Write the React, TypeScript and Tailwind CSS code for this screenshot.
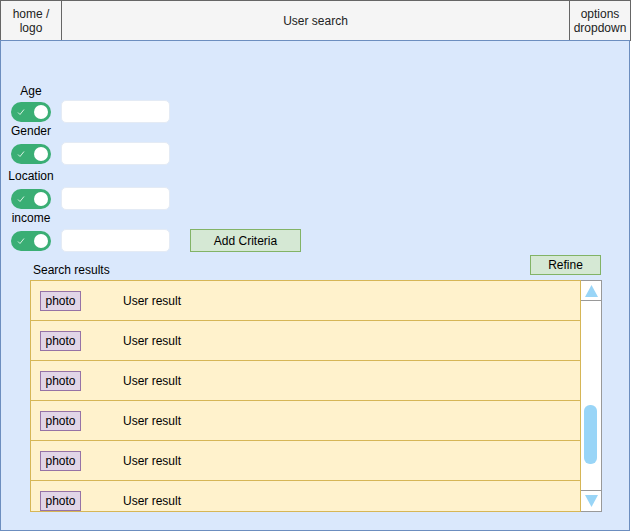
import React from "react";

const criteria = [
  { label: "Age", labelClass: "mt-[43px]", rowClass: "mt-[2px]" },
  { label: "Gender", labelClass: "mt-[1px]", rowClass: "mt-[4px]" },
  { label: "Location", labelClass: "mt-[4px]", rowClass: "mt-[4px]" },
  { label: "income", labelClass: "mt-[1px]", rowClass: "mt-[4px]" },
];

function Toggle() {
  return (
    <div className="relative flex h-[20px] w-[40px] items-center rounded-full bg-[#3aae74]">
      <svg width="8" height="8" viewBox="0 0 8 8" className="absolute left-[6px] top-[6px]">
        <path d="M1 4.5 L3 6.5 L7 1.5" fill="none" stroke="#d9f2e3" strokeWidth="1" />
      </svg>
      <div className="absolute right-[3px] top-[3px] h-[14px] w-[14px] rounded-full bg-white" />
    </div>
  );
}

function ResultRow() {
  return (
    <div className="flex h-[40px] shrink-0 items-center border-t border-[#d6b656] bg-[#fff2cc] pl-[9px]">
      <span className="flex h-[20px] w-[41px] items-center justify-center border border-[#9673a6] bg-[#e1d5e7] text-[12px] text-black">
        photo
      </span>
      <span className="ml-[42px] text-[12px] text-black">User result</span>
    </div>
  );
}

export default function App() {
  return (
    <div className="h-[531px] w-[631px] bg-white font-['Liberation_Sans',Arial,sans-serif] text-black">
      <header className="flex h-[41px] w-[631px] border border-[#666666] bg-[#f5f5f5] text-[12px] leading-[14px] text-[#222]">
        <div className="flex w-[60px] items-center justify-center text-center">
          home /<br />logo
        </div>
        <div className="flex flex-1 items-center justify-center border-x border-[#666666]">
          User search
        </div>
        <div className="flex w-[60px] items-center justify-center text-center">
          options<br />dropdown
        </div>
      </header>

      <main className="-mt-px h-[491px] w-[630px] border border-[#6c8ebf] bg-[#dae8fc] pl-[10px]">
        {criteria.map((c, i) => (
          <div key={c.label} className="flex flex-col">
            <div className={`${c.labelClass} flex w-[40px] justify-center whitespace-nowrap text-[12px] leading-[14px]`}>
              {c.label}
            </div>
            <div className={`${c.rowClass} flex h-[23px] items-center gap-[10px]`}>
              <Toggle />
              <div className="h-[23px] w-[109px] rounded-[5px] border border-[#e4ebf5] bg-white" />
              {i === 3 && (
                <button className="ml-[10px] h-[23px] w-[111px] border border-[#82b366] bg-[#d5e8d4] text-[12px]">
                  Add Criteria
                </button>
              )}
            </div>
          </div>
        ))}

        <div className="ml-[19px] mt-[3px] flex h-[20px] w-[571px] items-start justify-between">
          <span className="ml-[3px] mt-[8px] text-[12px] leading-[14px]">Search results</span>
          <button className="h-[20px] w-[71px] border border-[#82b366] bg-[#d5e8d4] text-[12px]">
            Refine
          </button>
        </div>

        <div className="ml-[19px] mt-[5px] flex h-[232px] w-[572px]">
          <div className="flex h-full w-[551px] flex-col overflow-hidden border-x border-b border-[#d6b656]">
            {Array.from({ length: 6 }).map((_, i) => (
              <ResultRow key={i} />
            ))}
          </div>
          <div className="flex h-full w-[21px] flex-col border border-l-0 border-[#999999] bg-white">
            <div className="flex h-[20px] items-center justify-center border-b border-[#999999]">
              <svg width="13" height="12" viewBox="0 0 13 12">
                <polygon points="6.5,0 13,12 0,12" fill="#99d5f7" />
              </svg>
            </div>
            <div className="flex flex-1 flex-col px-[3px]">
              <div className="mt-[104px] h-[59px] w-[13px] rounded-[6px] bg-[#99d5f7]" />
            </div>
            <div className="flex h-[21px] items-center justify-center border-t border-[#999999]">
              <svg width="13" height="12" viewBox="0 0 13 12">
                <polygon points="0,0 13,0 6.5,12" fill="#99d5f7" />
              </svg>
            </div>
          </div>
        </div>
      </main>
    </div>
  );
}
